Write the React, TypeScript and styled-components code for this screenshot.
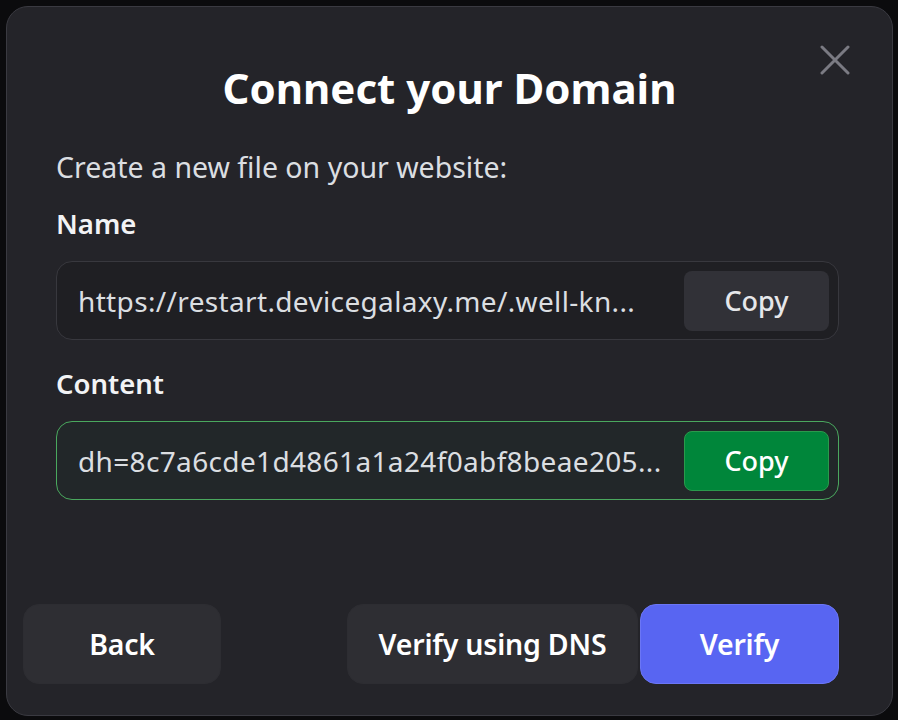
import styled, { createGlobalStyle } from "styled-components";

const GlobalStyle = createGlobalStyle`
  html, body {
    margin: 0;
    padding: 0;
    background: #0b0b0d;
  }
  body {
    font-family: "Noto Sans", "Liberation Sans", sans-serif;
    -webkit-font-smoothing: antialiased;
  }
`;

const Backdrop = styled.div`
  width: 898px;
  height: 720px;
  padding: 6px 5px 5px 6px;
  box-sizing: border-box;
  overflow: hidden;
`;

const Modal = styled.div`
  position: relative;
  width: 887px;
  height: 710px;
  box-sizing: border-box;
  background: #242429;
  border: 1px solid #3a3a41;
  border-radius: 22px;
  display: flex;
  flex-direction: column;
`;

const CloseButton = styled.button`
  position: absolute;
  top: 30px;
  right: 34px;
  width: 46px;
  height: 46px;
  padding: 0;
  border: none;
  background: transparent;
  display: flex;
  align-items: center;
  justify-content: center;
  cursor: pointer;
`;

const Title = styled.h1`
  margin: 56px 0 0;
  font-family: "Noto Sans", sans-serif;
  font-size: 42px;
  line-height: 50px;
  font-weight: 700;
  color: #ffffff;
  text-align: center;
`;

const Body = styled.div`
  padding: 0 53px 0 49px;
  display: flex;
  flex-direction: column;
`;

const Description = styled.p`
  margin: 36px 0 0;
  font-size: 28.5px;
  line-height: 36px;
  color: #dbdee1;
`;

const Label = styled.div`
  margin: 22px 0 20px;
  font-size: 27.5px;
  line-height: 34px;
  font-weight: 600;
  color: #f2f3f5;
`;

const Field = styled.div<{ $active?: boolean }>`
  height: 79px;
  box-sizing: border-box;
  display: flex;
  align-items: center;
  gap: 20px;
  padding: 0 9px 0 21px;
  border-radius: 16px;
  border: 1.5px solid ${(p) => (p.$active ? "#4aa85e" : "#38383e")};
  background: ${(p) => (p.$active ? "#222729" : "#1f1f23")};
`;

const FieldText = styled.span`
  flex: 1;
  min-width: 0;
  font-size: 28px;
  line-height: 40px;
  letter-spacing: 0.35px;
  color: #dbdee1;
  white-space: nowrap;
`;

const CopyButton = styled.button<{ $active?: boolean }>`
  flex: none;
  width: 145px;
  height: 60px;
  box-sizing: border-box;
  border-radius: 8px;
  border: 1.5px solid ${(p) => (p.$active ? "#2a9a4c" : "transparent")};
  background: ${(p) => (p.$active ? "#00863a" : "#313137")};
  color: ${(p) => (p.$active ? "#ffffff" : "#e6e7ea")};
  font-family: "Noto Sans", sans-serif;
  font-size: 27px;
  font-weight: 500;
  cursor: pointer;
`;

const Spacer = styled.div`
  height: 5px;
`;

const Footer = styled.div`
  margin-top: auto;
  padding: 0 53px 31px 16px;
  display: flex;
  align-items: center;
  justify-content: space-between;
`;

const ButtonGroup = styled.div`
  display: flex;
  gap: 2px;
`;

const ActionButton = styled.button<{ $primary?: boolean; $width: number }>`
  width: ${(p) => p.$width}px;
  height: 80px;
  box-sizing: border-box;
  border-radius: 16px;
  border: 1.5px solid ${(p) => (p.$primary ? "#6b76f5" : "#2d2d32")};
  background: ${(p) => (p.$primary ? "#5865f2" : "#2e2e33")};
  color: #ffffff;
  font-family: "Noto Sans", sans-serif;
  font-size: 28.5px;
  font-weight: 600;
  letter-spacing: -0.2px;
  cursor: pointer;
`;

function CloseIcon() {
  return (
    <svg width="30" height="30" viewBox="0 0 30 30" fill="none">
      <path
        d="M2 2L28 28M28 2L2 28"
        stroke="#7b7b83"
        strokeWidth="3"
        strokeLinecap="round"
      />
    </svg>
  );
}

export default function App() {
  return (
    <>
      <GlobalStyle />
      <Backdrop>
        <Modal>
          <CloseButton aria-label="Close">
            <CloseIcon />
          </CloseButton>
          <Title>Connect your Domain</Title>
          <Body>
            <Description>Create a new file on your website:</Description>
            <Label>Name</Label>
            <Field>
              <FieldText>https://restart.devicegalaxy.me/.well-kn...</FieldText>
              <CopyButton>Copy</CopyButton>
            </Field>
            <Spacer />
            <Label>Content</Label>
            <Field $active>
              <FieldText>dh=8c7a6cde1d4861a1a24f0abf8beae205...</FieldText>
              <CopyButton $active>Copy</CopyButton>
            </Field>
          </Body>
          <Footer>
            <ActionButton $width={198}>Back</ActionButton>
            <ButtonGroup>
              <ActionButton $width={291}>Verify using DNS</ActionButton>
              <ActionButton $primary $width={199}>
                Verify
              </ActionButton>
            </ButtonGroup>
          </Footer>
        </Modal>
      </Backdrop>
    </>
  );
}
